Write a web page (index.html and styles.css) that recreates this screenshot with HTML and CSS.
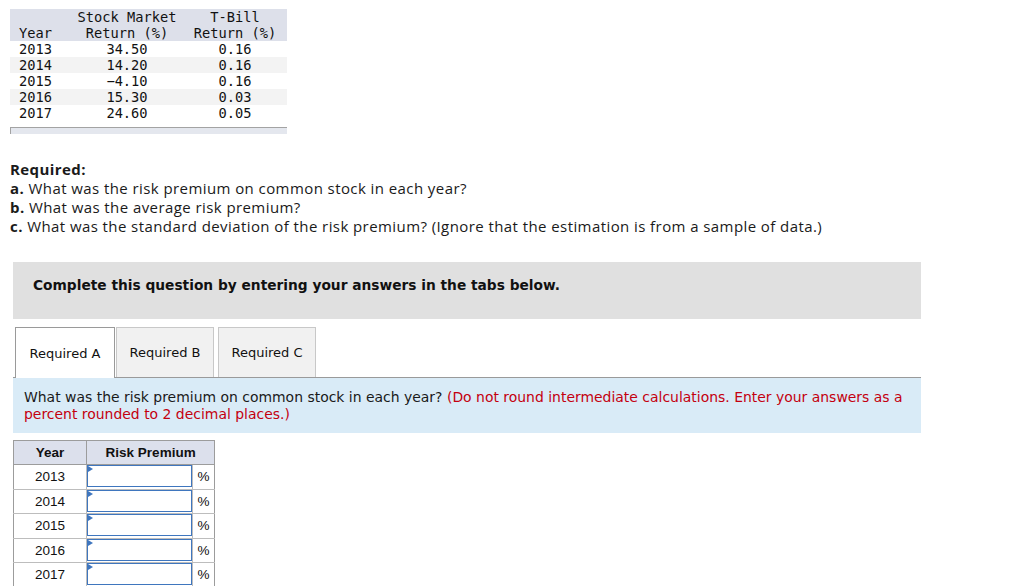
FILE: index.html
```html
<!DOCTYPE html>
<html>
<head>
<meta charset="utf-8">
<link rel="stylesheet" href="styles.css">
</head>
<body>
<div class="data-wrap">
  <table class="data">
    <thead>
      <tr><th class="c1">Year</th><th class="c2">Stock Market<br>Return (%)</th><th class="c3">T-Bill<br>Return (%)</th></tr>
    </thead>
    <tbody>
      <tr><td class="c1">2013</td><td class="c2">34.50</td><td class="c3">0.16</td></tr>
      <tr class="alt"><td class="c1">2014</td><td class="c2">14.20</td><td class="c3">0.16</td></tr>
      <tr><td class="c1">2015</td><td class="c2">−4.10</td><td class="c3">0.16</td></tr>
      <tr class="alt"><td class="c1">2016</td><td class="c2">15.30</td><td class="c3">0.03</td></tr>
      <tr><td class="c1">2017</td><td class="c2">24.60</td><td class="c3">0.05</td></tr>
    </tbody>
  </table>
  <div class="scrollbar"></div>
</div>

<div class="required">
  <p><b>Required:</b></p>
  <p><b>a.</b> What was the risk premium on common stock in each year?</p>
  <p><b>b.</b> What was the average risk premium?</p>
  <p><b>c.</b> What was the standard deviation of the risk premium? (Ignore that the estimation is from a sample of data.)</p>
</div>

<div class="complete">Complete this question by entering your answers in the tabs below.</div>

<div class="tabs">
  <div class="tab active">Required A</div>
  <div class="tab tab-b">Required B</div>
  <div class="tab tab-c">Required C</div>
</div>

<div class="instr">What was the risk premium on common stock in each year? <span class="red">(Do not round intermediate calculations. Enter your answers as a percent rounded to 2 decimal places.)</span></div>

<table class="answer">
  <thead>
    <tr><th class="ay">Year</th><th colspan="2">Risk Premium</th></tr>
  </thead>
  <tbody>
    <tr><td class="ay">2013</td><td class="inp"><div class="box"></div></td><td class="pct">%</td></tr>
    <tr><td class="ay">2014</td><td class="inp"><div class="box"></div></td><td class="pct">%</td></tr>
    <tr><td class="ay">2015</td><td class="inp"><div class="box"></div></td><td class="pct">%</td></tr>
    <tr><td class="ay">2016</td><td class="inp"><div class="box"></div></td><td class="pct">%</td></tr>
    <tr><td class="ay">2017</td><td class="inp"><div class="box"></div></td><td class="pct">%</td></tr>
  </tbody>
</table>
</body>
</html>
```

FILE: styles.css
```css
html, body { margin: 0; padding: 0; background: #fff; }
body { padding: 9px 0 0 0; overflow: hidden; }

.data-wrap { margin-left: 10px; width: 277px; }
.data {
  border-collapse: collapse;
  width: 277px;
  font-family: "DejaVu Sans Mono", monospace;
  font-size: 13.7px;
  line-height: 16px;
  color: #111;
}
.data th { font-weight: normal; background: #dde0ea; vertical-align: bottom; padding: 0; }
.data td { padding: 0; }
.data .c1 { width: 57px; text-align: left; padding-left: 9px; box-sizing: border-box; }
.data .c2 { width: 120px; text-align: center; }
.data .c3 { text-align: center; padding-right: 4px; }
.data tr.alt td { background: #f3f3f3; }
.scrollbar {
  margin-top: 6px;
  height: 6px;
  border-top: 1px solid #a3a3a3;
  border-left: 1px solid #a3a3a3;
  background: #e4e7ee;
}

.required {
  margin: 26px 0 0 10px;
  font-family: "Open Sans", sans-serif;
  font-size: 15px;
  letter-spacing: 0.42px;
  line-height: 19px;
  color: #1a1a1a;
}
.required p { margin: 0; }

.complete {
  margin: 26px 0 0 13px;
  width: 908px;
  height: 57px;
  box-sizing: border-box;
  background: #e0e0e0;
  padding: 15px 20px;
  font-family: "DejaVu Sans", sans-serif;
  font-weight: bold;
  font-size: 13.75px;
  line-height: 17px;
  color: #111;
}

.tabs {
  margin: 8px 0 0 13px;
  width: 908px;
  display: flex;
  padding-left: 2px;
  box-sizing: border-box;
  border-bottom: 1px solid #9a9a9a;
  height: 51px;
}
.tab {
  box-sizing: border-box;
  height: 50px;
  width: 98px;
  display: flex;
  align-items: center;
  justify-content: center;
  white-space: nowrap;
  background: #f1f1f1;
  border: 1px solid #c8c8c8;
  border-bottom: none;
  font-family: "DejaVu Sans", sans-serif;
  font-size: 13px;
  color: #111;
}
.tab.active {
  background: #fff;
  border: 1px solid #9a9a9a;
  border-bottom: none;
  height: 51px;
  width: 100px;
}
.tab-b { margin-left: 1px; }
.tab-c { margin-left: 4px; }

.instr {
  margin-left: 13px;
  width: 908px;
  box-sizing: border-box;
  background: #d9ebf7;
  padding: 11px 11px 10px 11px;
  font-family: "DejaVu Sans", sans-serif;
  font-size: 13.95px;
  line-height: 17px;
  color: #1a1a1a;
}
.red { color: #c4000f; }

.answer {
  margin: 7px 0 0 13px;
  border-collapse: collapse;
  width: 202px;
  font-family: "Liberation Sans", Arial, sans-serif;
  font-size: 13.5px;
  color: #111;
}
.answer th {
  background: #dce0ec;
  border: 1px solid #9c9c9c;
  height: 23px;
  padding: 0;
  font-weight: bold;
}
.answer td {
  border: 1px solid #bdbdbd;
  height: 23.5px;
  padding: 0;
  text-align: center;
}
.answer .ay { width: 73px; border-left: 1px solid #9c9c9c; }
.answer td.inp { width: 106px; padding: 0; vertical-align: top; }
.answer td.pct { width: 21px; border-right: 1px solid #9c9c9c; }
.box {
  height: 20px;
  border: 1.5px solid #3f76be;
  position: relative;
  background: #fff;
}
.box::before {
  content: "";
  position: absolute;
  left: 0;
  top: 0;
  border-top: 3px solid transparent;
  border-bottom: 3px solid transparent;
  border-left: 5px solid #3f76be;
}
```
